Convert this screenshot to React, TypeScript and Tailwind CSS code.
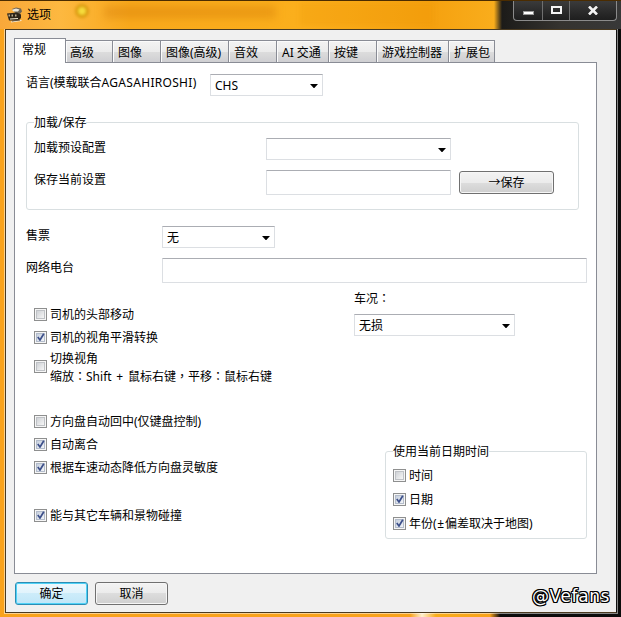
import { useState } from 'react';
import type { ReactNode } from 'react';
import clsx from 'clsx';

const TABS = [
  { label: '常规', width: 'w-[52px]' },
  { label: '高级', width: 'w-[47px]' },
  { label: '图像', width: 'w-[48px]' },
  { label: '图像(高级)', width: 'w-[68px]' },
  { label: '音效', width: 'w-[48px]' },
  { label: 'AI 交通', width: 'w-[52px]' },
  { label: '按键', width: 'w-[48px]' },
  { label: '游戏控制器', width: 'w-[72px]' },
  { label: '扩展包', width: 'w-[46px]' },
];

// Full-width punctuation sits in the middle of its cell
function Punct({ children }: { children: ReactNode }) {
  return <span className="font-['Noto_Sans_CJK_TC',sans-serif]">{children}</span>;
}

function Checkbox({
  label,
  initial = false,
  className,
}: {
  label: ReactNode;
  initial?: boolean;
  className?: string;
}) {
  const [checked, setChecked] = useState(initial);

  return (
    <button
      type="button"
      role="checkbox"
      aria-checked={checked}
      onClick={() => setChecked((c) => !c)}
      className={clsx('flex items-center gap-[3px] text-left whitespace-nowrap', className)}
    >
      <span className="size-[13px] shrink-0 border border-[#8e8f8f] bg-[#f6f6f6] p-px">
        <span
          className={clsx(
            'block size-[9px] border',
            checked
              ? 'border-[#b3bccb] bg-linear-to-br from-[#c6cfdd] to-[#f3f5f8]'
              : 'border-[#bfc2c6] bg-linear-to-br from-[#cfd2d6] to-[#f6f6f6]'
          )}
        >
          {checked && (
            <svg className="-mt-px size-[8px]" viewBox="0 0 8 8" fill="none" stroke="#3c4f8a" strokeWidth="1.7">
              <path d="M0.8 4L3 7L6.8 0.8" />
            </svg>
          )}
        </span>
      </span>
      <span className="pt-[2px]">{label}</span>
    </button>
  );
}

function Select({ value, className }: { value?: string; className?: string }) {
  return (
    <button
      type="button"
      className={clsx(
        'flex h-[22px] shrink-0 items-center justify-between border border-[#dcdfe3] border-t-[#abadb3] bg-white pr-1 pl-1',
        className
      )}
    >
      <span className="pt-px">{value}</span>
      <svg className="mt-[2px] h-[4px] w-[8px]" viewBox="0 0 8 4" fill="#000">
        <path d="M0 0H8L4 4.4Z" />
      </svg>
    </button>
  );
}

function TextField({ className }: { className?: string }) {
  return (
    <input
      type="text"
      className={clsx(
        'h-[25px] shrink-0 rounded-[1px] border border-[#dcdfe3] border-t-[#abadb3] bg-white px-1 outline-none',
        className
      )}
    />
  );
}

function PushButton({
  children,
  primary = false,
  className,
}: {
  children: ReactNode;
  primary?: boolean;
  className?: string;
}) {
  return (
    <button
      type="button"
      className={clsx(
        'flex h-[23px] shrink-0 items-center justify-center rounded-[3px] border pt-px',
        primary
          ? 'border-[#2c8db4] bg-[linear-gradient(#eef8fd_0%,#e0f3fc_50%,#cdecfa_50%,#c0e6f8_100%)] shadow-[inset_0_0_0_1px_#4fd2f7]'
          : 'border-[#707070] bg-[linear-gradient(#f3f3f3_0%,#ebebeb_50%,#dddddd_50%,#cfcfcf_100%)] shadow-[inset_0_0_0_1px_#f6f6f6]',
        className
      )}
    >
      {children}
    </button>
  );
}

function GroupBox({ title, className, children }: { title: string; className?: string; children: ReactNode }) {
  return (
    <section className={clsx('rounded-[3px] border border-[#d9dfe1]', className)}>
      <h2 className="-mt-[8px] ml-[7px] h-4 w-fit bg-white leading-4">{title}</h2>
      {children}
    </section>
  );
}

function AppIcon() {
  return (
    <svg className="size-4" viewBox="0 0 16 16" fill="none">
      <path d="M5 2L9 0.5L14 1.5L15 4.5L12.5 7.5L9 7Z" fill="#6e6454" />
      <path d="M5 2.8L9 1.5L12.5 2.5L11 4.5L6.5 4.6Z" fill="#ebe6dc" />
      <path d="M0 6.5L10 5.5L14 7.5V11L11.5 13.5H2Z" fill="#2e2419" />
      <path d="M1.5 7.5H3V9.5H1.5ZM4.5 7.5H6V9.5H4.5ZM8 7.5H9.5V9.5H8Z" fill="#b9a98c" />
      <path d="M3 12L11 11.5M4 15L14.5 13.5" stroke="#f3ead4" />
      <path d="M5 14L13 13" stroke="#5c5346" />
    </svg>
  );
}

function TitleBar() {
  return (
    <header className="relative flex h-[29px] items-start justify-between overflow-hidden border-t border-[#4b2c00] bg-[linear-gradient(90deg,#f8a83a_0,#fdb840_60px,#f9a91c_130px,#fbaf1c_300px,#f5a10f_430px,#f9ad1c_494px,#1c1b19_502px,#35332f_560px,#383838_621px)] pr-1 pl-[7px]">
      {/* Blurred desktop showing through the glass */}
      <div className="absolute top-[3px] left-[75px] size-[14px] rounded-full border-[3px] border-[#d99a10] bg-[#f6dc3c] blur-[1.5px]" />
      <div className="absolute top-[5px] left-[104px] h-[12px] w-[172px] bg-[#c76c00]/30 blur-[4px]" />
      <div className="absolute top-[2px] left-[300px] h-[22px] w-[134px] bg-[#e98f00]/20 blur-[2px]" />
      <div className="relative flex items-center gap-1 pt-[6px]">
        <AppIcon />
        <h1 className="text-black">选项</h1>
      </div>
      <div className="relative flex h-[20px] overflow-hidden rounded-b-[4px] border border-t-0 border-[#8b8b8b] bg-linear-to-b from-[#3b3b3b] to-[#1e1e1e]">
        <button type="button" aria-label="最小化" className="flex w-[29px] justify-center border-r border-[#6f6f6f] pt-[10px]">
          <span className="h-[4px] w-[11px] border border-[#999] bg-white" />
        </button>
        <button type="button" aria-label="最大化" className="flex w-[27px] justify-center border-r border-[#6f6f6f] pt-[5px]">
          <span className="h-[8px] w-[11px] border-[2.5px] border-[#f4f4f4]" />
        </button>
        <button type="button" aria-label="关闭" className="flex w-[46px] justify-center pt-[5px]">
          <svg className="h-[9px] w-[10px]" viewBox="0 0 10 9" stroke="#f4f4f4" strokeWidth="2.6">
            <path d="M1 0.5L9 8.5M9 0.5L1 8.5" />
          </svg>
        </button>
      </div>
    </header>
  );
}

function TabStrip() {
  const [active, setActive] = useState(0);

  return (
    <div role="tablist" className="relative z-10 flex h-[25px] items-end">
      {TABS.map((tab, i) => (
        <button
          key={tab.label}
          type="button"
          role="tab"
          aria-selected={i === active}
          onClick={() => setActive(i)}
          className={clsx(
            'flex shrink-0 whitespace-nowrap border border-[#898c95] leading-4',
            tab.width,
            i === active
              ? 'h-[25px] border-b-0 bg-white pt-[3px] pl-[7px]'
              : 'h-[23px] border-l-0 bg-[linear-gradient(#f3f3f3_0%,#ebebeb_50%,#dddddd_50%,#cfcfd2_100%)] pt-[4px] shadow-[inset_1px_1px_0_#fbfbfb]',
            i === active + 1 && 'pl-[4px]',
            i !== active && i !== active + 1 && 'pl-[5px]'
          )}
        >
          {tab.label}
        </button>
      ))}
    </div>
  );
}

function GeneralPage() {
  return (
    <div className="-mt-px h-[512px] w-[583px] border border-[#898c95] bg-white pt-[11px] pl-[11px]">
      <div className="flex h-[22px]">
        <label className="w-[184px] leading-[18px]">
          语言(模载联合<span className="tracking-[0.3px]">AGASAHIROSHI</span>)
        </label>
        <Select value="CHS" className="w-[113px]" />
      </div>

      <GroupBox title="加载/保存" className="mt-[26px] h-[88px] w-[553px]">
        <div className="mt-[7px] ml-[7px] flex h-[22px]">
          <span className="w-[232px] leading-[19px]">加载预设配置</span>
          <Select className="w-[185px]" />
        </div>
        <div className="mt-[10px] ml-[7px] flex h-[25px]">
          <span className="w-[232px] leading-[19px]">保存当前设置</span>
          <TextField className="w-[185px]" />
          <PushButton className="mt-px ml-2 w-[95px]">→保存</PushButton>
        </div>
      </GroupBox>

      <div className="mt-[16px] flex h-[22px]">
        <span className="w-[136px] leading-[19px]">售票</span>
        <Select value="无" className="w-[113px]" />
      </div>
      <div className="mt-[10px] flex h-[25px]">
        <span className="w-[136px] leading-[19px]">网络电台</span>
        <TextField className="w-[425px]" />
      </div>

      <div className="flex">
        <div className="w-[328px] pt-[23px] pl-2">
          <Checkbox label="司机的头部移动" className="h-4" />
          <Checkbox label="司机的视角平滑转换" initial className="mt-[7px] h-4" />
          <Checkbox
            label={
              <>
                切换视角
                <br />
                缩放<Punct>：</Punct>
                <span className="[word-spacing:1.6px]">Shift + </span>
                鼠标右键<Punct>，</Punct>平移<Punct>：</Punct>鼠标右键
              </>
            }
            className="mt-[4px] h-[34px] leading-[17px]"
          />
          <Checkbox label="方向盘自动回中(仅键盘控制)" className="mt-[30px] h-4" />
          <Checkbox label="自动离合" initial className="mt-[7px] h-4" />
          <Checkbox label="根据车速动态降低方向盘灵敏度" initial className="mt-[7px] h-4" />
          <Checkbox label="能与其它车辆和景物碰撞" initial className="mt-[32px] h-4" />
        </div>

        <div className="pt-[6px]">
          <p className="leading-[18px]">
            车况<Punct>：</Punct>
          </p>
          <Select value="无损" className="mt-[6px] w-[161px]" />
          <GroupBox title="使用当前日期时间" className="mt-[115px] ml-[31px] h-[88px] w-[202px]">
            <div className="mt-[7px] ml-[7px] flex flex-col gap-2">
              <Checkbox label="时间" className="h-4" />
              <Checkbox label="日期" initial className="h-4" />
              <Checkbox
                label={
                  <>
                    年份<span className="tracking-[0.7px]">(±</span>偏差取决于地图)
                  </>
                }
                initial
                className="h-4"
              />
            </div>
          </GroupBox>
        </div>
      </div>
    </div>
  );
}

export default function App() {
  return (
    <div className="flex h-[617px] w-[621px] flex-col overflow-hidden bg-[linear-gradient(90deg,#f9a21b_0,#f9a21b_410px,#fff0d0_422px,#f9ad1c_436px,#f9a21b_490px,#0c0c0c_500px,#0c0c0c_621px)] font-['Noto_Sans','Noto_Sans_CJK_SC',sans-serif] text-[12px] leading-4 text-black">
      <TitleBar />
      <main className="mx-[5px] h-[584px] w-[612px] border border-[#4a3a20] border-r-[#111] bg-[#f0f0f0] pt-[8px] pl-[8px] shadow-[0_0_0_1px_#ffffff80]">
        <TabStrip />
        <GeneralPage />
        <footer className="mt-[8px] flex gap-[7px] pl-px">
          <PushButton primary className="w-[73px]">
            确定
          </PushButton>
          <PushButton className="w-[73px]">取消</PushButton>
          <span className="mt-[4px] mr-[6px] ml-auto font-['DejaVu_Sans',sans-serif] text-[17px] leading-5 tracking-[0.6px] text-white [text-shadow:1px_0_0_#000,-1px_0_0_#000,0_1px_0_#000,0_-1px_0_#000,1px_1px_0_#000,-1px_-1px_0_#000,1px_-1px_0_#000,-1px_1px_0_#000]">
            @Vefans
          </span>
        </footer>
      </main>
    </div>
  );
}
